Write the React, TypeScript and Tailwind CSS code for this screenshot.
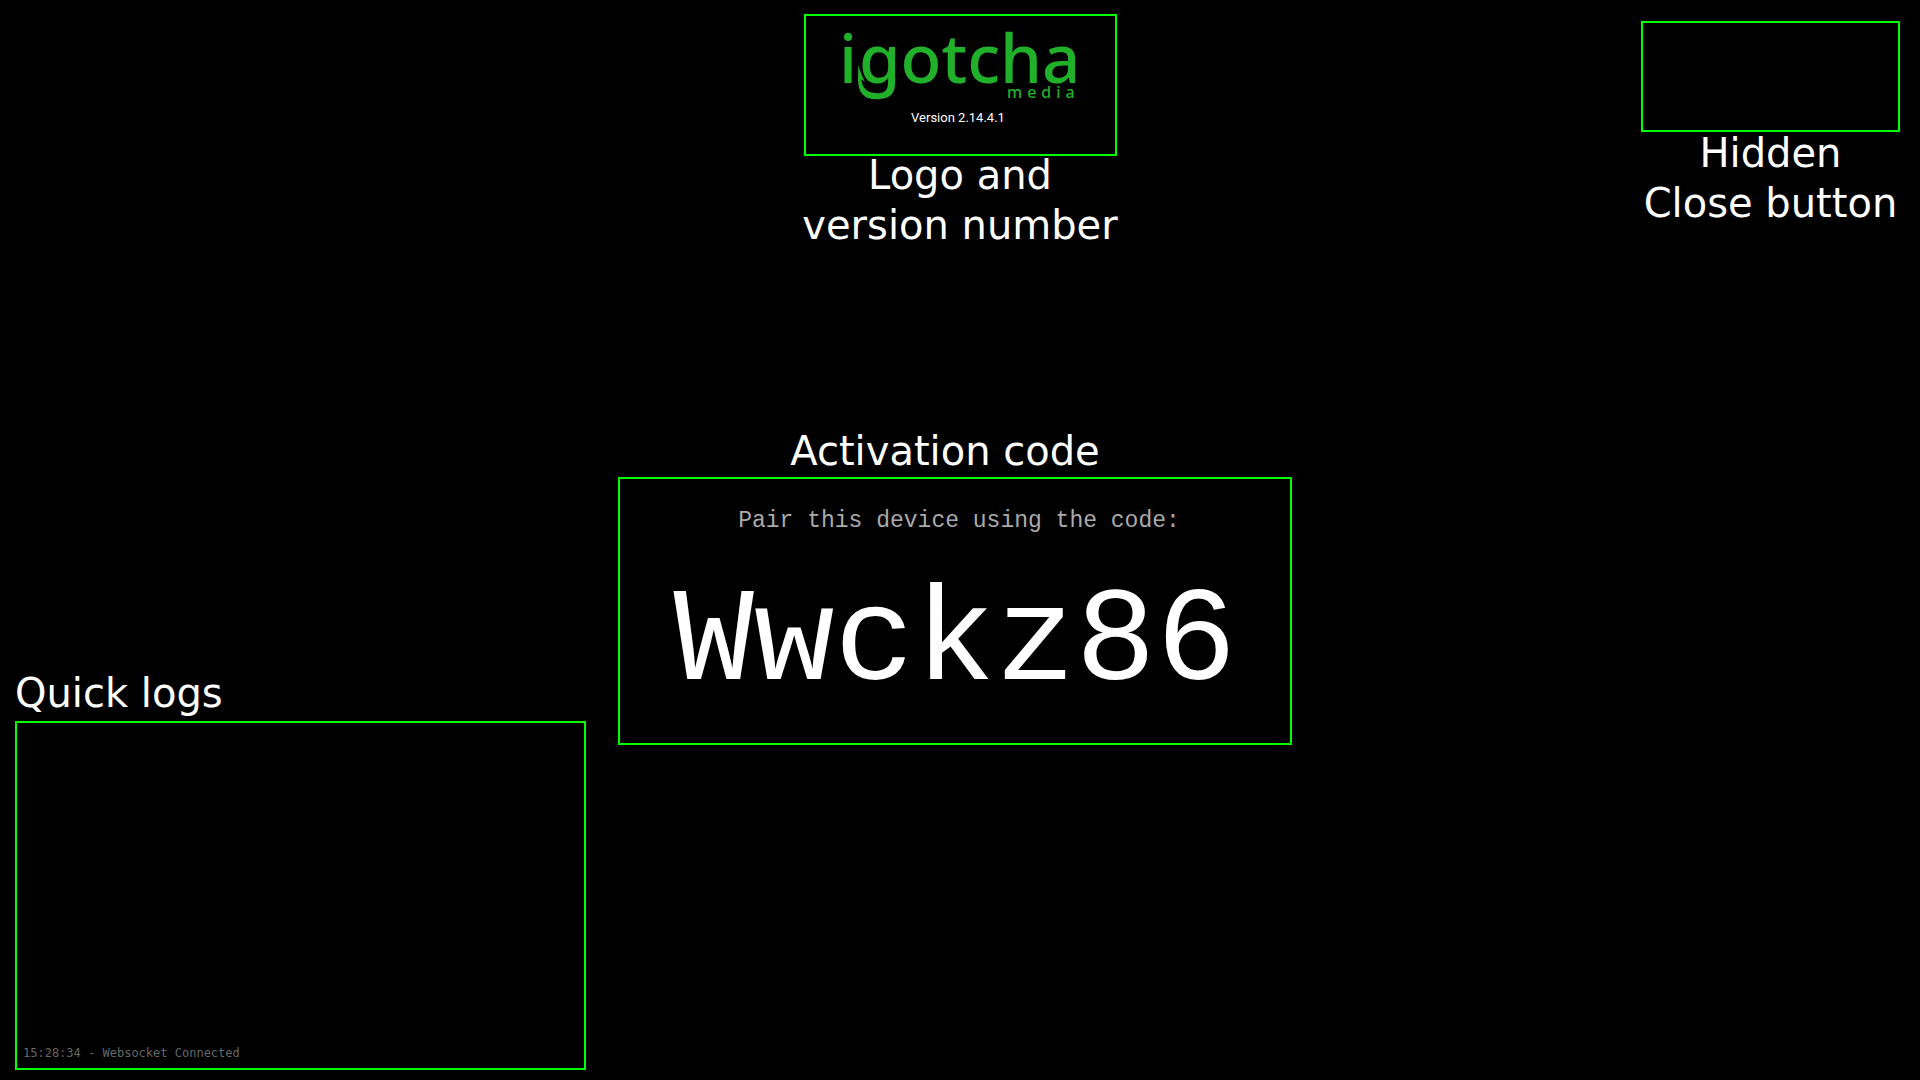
import type { ReactNode } from "react";

const version = "2.14.4.1";
const pairingCode = "Wwckz86";

const logs = [{ time: "15:28:34", message: "Websocket Connected" }];

const Label = ({ children, className = "" }: { children: ReactNode; className?: string }) => (
  <h2 className={`font-['DejaVu_Sans',sans-serif] text-[40px] leading-[50px] whitespace-nowrap ${className}`}>
    {children}
  </h2>
);

const Logo = () => (
  <svg viewBox="0 0 240 80" className="w-60 h-20 overflow-visible fill-[#20b02a]" role="img" aria-label="igotcha media">
    <g className="font-['Noto_Sans',sans-serif] text-[67px] font-medium">
      <text x="-1" y="57">i</text>
      <text x="19" y="57">gotcha</text>
    </g>
    {/* Fish hook on the tail of the g */}
    <path d="M18.3 38.5 C19.8 44.5 22 50 25 56 L21.4 53.2 C21.8 61 27 67 36 67.5 L40 73.2 L37 73.2 C24 73.2 18 67 18 53 Z" />
    <text x="167" y="72" className="font-['Noto_Sans',sans-serif] text-[16px] font-medium tracking-[5px]">
      media
    </text>
  </svg>
);

export default function App() {
  return (
    <div className="min-h-screen flex flex-col bg-black text-white">
      {/* Header */}
      <header className="grid grid-cols-[1fr_auto_1fr] items-start pt-3.5 px-5">
        <section className="col-start-2 flex flex-col items-center text-center">
          <div className="w-[313px] border-2 border-[#00ff00] pt-2.5 pb-6 flex flex-col items-center">
            <Logo />
            <p className="pr-1 font-[Roboto,sans-serif] text-[13px] leading-6">Version {version}</p>
          </div>
          <Label className="-mt-1.5">
            Logo and
            <br />
            version number
          </Label>
        </section>

        <section className="mt-[7px] justify-self-end flex flex-col items-center text-center">
          <button type="button" aria-label="Close" className="w-[259px] h-[111px] border-2 border-[#00ff00]" />
          <Label className="-mt-1">
            Hidden
            <br />
            Close button
          </Label>
        </section>
      </header>

      <main className="flex-1 grid grid-cols-[1fr_674px_1fr] pr-2.5">
        {/* Quick logs */}
        <section className="self-end pl-[15px] pr-8 pb-2.5">
          <Label className="mb-[3px]">Quick logs</Label>
          <div className="h-[349px] border-2 border-[#00ff00] px-1.5 pb-[7px] flex flex-col justify-end">
            <ul className="font-['DejaVu_Sans_Mono',monospace] text-[12px] leading-4 text-[#666]">
              {logs.map((log) => (
                <li key={log.time}>
                  {log.time} - {log.message}
                </li>
              ))}
            </ul>
          </div>
        </section>

        {/* Activation code */}
        <section className="pt-44 text-center">
          <Label className="pr-5 mb-px">Activation code</Label>
          <div className="border-2 border-[#00ff00] pt-7 pb-6 font-['Courier_New','Liberation_Mono',monospace]">
            <p className="pl-2 text-[23px] leading-7 text-[#aaa]">Pair this device using the code:</p>
            <p className="mt-8 text-[134px] leading-[152px]">{pairingCode}</p>
          </div>
        </section>
      </main>
    </div>
  );
}
